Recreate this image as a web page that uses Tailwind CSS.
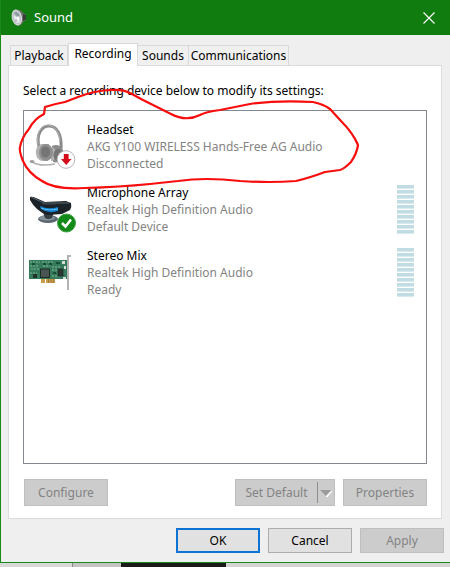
<!DOCTYPE html>
<html lang="en">
<head>
    <meta charset="UTF-8">
    <meta name="viewport" content="width=device-width, initial-scale=1.0">
    <title>Sound</title>
    <script src="https://cdn.jsdelivr.net/npm/@tailwindcss/browser@4"></script>
</head>
<body class="min-h-screen flex flex-col bg-[#dcdcdc] font-['Noto_Sans','Open_Sans',sans-serif] text-[12px] text-black">
    <div class="relative flex-1 flex flex-col bg-[#efefef] border-l border-b border-[#178a17]">
        <!-- Title bar -->
        <header class="h-[35px] shrink-0 flex items-center justify-between bg-[#107c10] text-white pl-[10px] pr-[13px]">
            <div class="flex items-center gap-[7px]">
                <svg class="w-4 h-[18px]" viewBox="0 0 16 18" aria-hidden="true">
                    <path d="M5 .5 L10 1.5 L12 4 L15 5.5 L15 11 L12.500 12.500 L10 16 L6 16.500Z" fill="#6f706d"/>
                    <path d="M12 5 L15 6 L15 10.500 L12 12Z" fill="#353b35"/>
                    <ellipse cx="5.8" cy="8.5" rx="4.6" ry="7.6" transform="rotate(-12 5.8 8.5)" fill="#b9bfc4" stroke="#d9dada"/>
                    <path d="M3 4 Q6 2 8.500 6 L7 8Z" fill="#8b959d"/>
                    <path d="M7 9 L2.500 6 L3.500 11Z" fill="#e9edf0"/>
                    <path d="M7 10 L5 14 Q8 15 9.500 12Z" fill="#e2e6e9"/>
                    <ellipse cx="7" cy="9.500" rx="1.5" ry="2" fill="#f8fafb"/>
                </svg>
                <h1 class="text-[13px]">Sound</h1>
            </div>
            <button class="w-4 h-4 flex items-center justify-center" aria-label="Close">
                <svg class="w-3 h-3" viewBox="0 0 12 12" fill="none" stroke="#fff" stroke-width="1.1"><path d="M.5 .5 L11.5 11.5 M11.5 .5 L.5 11.5"/></svg>
            </button>
        </header>

        <main class="flex-1 flex flex-col pl-[7px] pr-2 pt-2">
            <!-- Tabs -->
            <nav class="flex items-end pl-0.5" role="tablist">
                <button role="tab" class="h-5 w-[58px] border border-b-0 border-[#d9d9d9] bg-[#f0f0f0] whitespace-nowrap flex items-center justify-center">Playback</button>
                <button role="tab" aria-selected="true" class="relative h-[23px] -mb-px w-[70px] border border-b-0 border-[#d9d9d9] bg-white whitespace-nowrap flex items-center justify-center pb-0.5">Recording</button>
                <button role="tab" class="h-5 w-[50px] border border-x-0 border-b-0 border-[#d9d9d9] bg-[#f0f0f0] whitespace-nowrap flex items-center justify-center">Sounds</button>
                <button role="tab" class="h-5 w-[101px] border border-b-0 border-[#d9d9d9] bg-[#f0f0f0] whitespace-nowrap flex items-center justify-center">Communications</button>
            </nav>

            <section class="flex-1 flex flex-col bg-white border border-[#dcdcdc] px-[14px] pt-4 pb-3">
                <p class="leading-[18px] whitespace-nowrap">Select a recording device below to modify its settings:</p>

                <!-- Device list -->
                <ul class="mt-[10px] flex-1 border border-[#828790] pt-1">
                    <li class="flex items-center py-1.5 pl-1 pr-3">
                        <svg class="w-12 h-12 shrink-0" viewBox="0 0 48 48" fill="none" aria-hidden="true">
                            <path d="M11 24 C8 12 13 3 21 3 C29 3 34 12 33 26" stroke="#8a8a8a" stroke-width="3"/>
                            <path d="M10 22 C8 10 13 2 20 2 C26 2 31 8 32 18" stroke="#b9b9b9"/>
                            <path d="M4 39 C9 42 16 43 27 41" stroke="#b0b0b0" stroke-width="1.6"/>
                            <ellipse cx="4" cy="38.500" rx="2.5" ry="1.6" fill="#9d9d9d"/>
                            <path d="M24 23 Q31 20 35 27 L35 34 Q32 41 25 39Z" fill="#8c8c8c"/>
                            <path d="M24 24 Q29 26 28 33 Q27 38 23 38Z" fill="#b0b0b0"/>
                            <ellipse cx="30" cy="32" rx="4.5" ry="6" fill="#757575"/>
                            <path d="M13 21 Q7 24 8 31 Q9 37 14 38 L20 38 L21 21Z" fill="#b2b2b2"/>
                            <ellipse cx="18" cy="29.5" rx="7" ry="8.5" fill="#8e8e8e"/>
                            <ellipse cx="17.500" cy="29" rx="4.5" ry="5.5" fill="#757575"/>
                            <circle cx="38" cy="36.500" r="8.8" fill="#fff" stroke="#b5b5b5"/>
                            <path d="M35.8 31 H40.6 V36 H43.500 L38.2 42 L33 36 H35.8Z" fill="#d40c17"/>
                        </svg>
                        <div class="flex-1 ml-[11px] leading-[17px] whitespace-nowrap text-[#838383]">
                            <p class="text-black">Headset</p>
                            <p>AKG Y100 WIRELESS Hands-Free AG Audio</p>
                            <p>Disconnected</p>
                        </div>
                    </li>
                    <li class="flex items-center py-1.5 pl-1 pr-3">
                        <svg class="w-12 h-12 shrink-0" viewBox="0 0 48 48" aria-hidden="true">
                            <ellipse cx="20" cy="33" rx="10" ry="4" fill="#5b6670"/>
                            <ellipse cx="19" cy="32" rx="8" ry="2.5" fill="#87939d"/>
                            <path d="M15 26 H26 L24 32 Q20 34 17 32Z" fill="#353d44"/>
                            <path d="M2 11 Q4 10 8 12 L17 16 L38 15 L43 17 Q44 21 42 24 L34 28 L19 29 Q8 25 2 14Z" fill="#1b2228"/>
                            <path d="M3 11 L16 17 L41 17" stroke="#5c6871" stroke-width="1" fill="none"/>
                            <path d="M12 20 Q20 24 30 21 L30 25 Q20 28 13 23Z" fill="#1483d4"/>
                            <path d="M13 22 Q20 25 30 23" stroke="#5cc0f5" stroke-width="1" fill="none"/>
                            <path d="M14 18 H28" stroke="#3d4952" stroke-width="1"/>
                            <circle cx="38.500" cy="37" r="9" fill="#118a18" stroke="#3f9f42"/>
                            <path d="M34 37 L37.500 40.500 L43 33.500" stroke="#fff" stroke-width="2.5" fill="none"/>
                        </svg>
                        <div class="flex-1 ml-[11px] leading-[17px] whitespace-nowrap text-[#838383]">
                            <p class="text-black">Microphone Array</p>
                            <p>Realtek High Definition Audio</p>
                            <p>Default Device</p>
                        </div>
                        <div class="meter w-[17px] flex flex-col gap-px"></div>
                    </li>
                    <li class="flex items-center py-1.5 pl-1 pr-3">
                        <svg class="w-12 h-12 shrink-0" viewBox="0 0 48 48" aria-hidden="true">
                            <path d="M1 11 H39 V30 H1Z" fill="#367b5b"/>
                            <path d="M13 30 H17 V34 H13Z M18 30 H27 V34 H18Z" fill="#c99b4a"/>
                            <path d="M20.500 30V34 M23 30V34 M25.500 30V34" stroke="#906d32" stroke-width=".7"/>
                            <path d="M2 13H12 M2 17H10 M3 20H11 M2 24H9 M14 13H26 M24 18H33 M24 21H29 M24 27H31 M15 17H22" stroke="#83b89c" stroke-dasharray="2 1"/>
                            <path d="M4 14H7V16H4Z M15 14H18V16H15Z M21 14H24V16H21Z M28 13H32V15H28Z M25 23H28V25H25Z" fill="#164d35"/>
                            <rect x="12.500" y="20" width="9" height="8.5" fill="#4a5452" stroke="#1a2d25"/>
                            <rect x="5" y="25" width="4" height="4" fill="#20362d"/>
                            <rect x="30" y="20" width="5" height="7" fill="#2b3733" stroke="#17271f" stroke-width=".6"/>
                            <path d="M34 12H37V15H34Z M36 17H38V20H36Z M35 28H38V30H35Z" fill="#d6ddd6"/>
                            <path d="M43 7 H40 V41" stroke="#b4b4b4" stroke-width="2" fill="none"/>
                        </svg>
                        <div class="flex-1 ml-[11px] leading-[17px] whitespace-nowrap text-[#838383]">
                            <p class="text-black">Stereo Mix</p>
                            <p>Realtek High Definition Audio</p>
                            <p>Ready</p>
                        </div>
                        <div class="meter w-[17px] flex flex-col gap-px"></div>
                    </li>
                </ul>

                <!-- Device actions -->
                <div class="mt-[15px] flex items-center justify-between pl-px text-[#838383]">
                    <button disabled class="w-[84px] h-[27px] bg-[#cccccc] border border-[#bfbfbf]">Configure</button>
                    <div class="flex gap-2">
                        <div class="flex h-[27px] w-[100px] bg-[#cccccc] border border-[#bfbfbf]">
                            <button disabled class="flex-1 whitespace-nowrap">Set Default</button>
                            <button disabled class="w-[17px] my-0.5 border-l border-[#8f8f8f] flex items-center justify-center" aria-label="More defaults">
                                <svg class="w-3 h-2" viewBox="0 0 12 8"><path d="M6 7 L7 8 L12 2Z" fill="#fff" stroke="#fff"/><path d="M0 1 H11 L6 7Z" fill="#9b9b9b"/></svg>
                            </button>
                        </div>
                        <button disabled class="w-[84px] h-[27px] bg-[#cccccc] border border-[#bfbfbf]">Properties</button>
                    </div>
                </div>
            </section>
        </main>

        <!-- Dialog buttons -->
        <footer class="flex justify-end gap-2 pt-[9px] pb-[9px] pr-1.5">
            <button class="w-[84px] h-[25px] bg-[#e1e1e1] border-2 border-[#0b73d4]">OK</button>
            <button class="w-[84px] h-[25px] bg-[#e1e1e1] border border-[#adadad]">Cancel</button>
            <button disabled class="w-[84px] h-[25px] bg-[#cccccc] border border-[#bfbfbf] text-[#838383]">Apply</button>
        </footer>

        <!-- Hand-drawn highlight -->
        <svg class="absolute top-0 -left-px w-[450px] h-[200px] pointer-events-none" viewBox="0 0 450 200" fill="none" stroke="#f80c0c" stroke-width="2.2" stroke-linecap="round" stroke-linejoin="round" aria-hidden="true">
            <path d="M44 114 L45 107 Q54 104 65 102 L78 97 Q93 91 110 90 Q123 89 130 93 L143 100 L171 114 Q186 122 200 115 Q205 112 220 110 L250 104 Q278 100 313 102 Q323 104 330 109 L341 121 Q353 133 358 145 Q357 153 351 162 Q344 169 340 170 L325 172 Q309 178 296 181 Q270 183 240 181 Q205 177 178 181 L150 184 Q120 187 85 188 Q55 190 42 181 Q28 173 23 161 Q19 151 20 147 Q22 137 29 129 Q34 119 44 114"/>
        </svg>
    </div>

    <!-- Desktop strip under the window -->
    <div class="h-1 shrink-0 flex">
        <div class="w-[73px] bg-[#d8d8d8] border-r border-[#888888]"></div>
        <div class="w-12 bg-[#c4c4c4]"></div>
        <div class="w-[105px] bg-[#1a1a1a]"></div>
        <div class="flex-1 bg-[#d4d4d4]"></div>
    </div>

    <script>
        // Ten segments per level meter
        document.querySelectorAll('.meter').forEach(meter => {
            for (let i = 0; i < 10; i++) {
                const bar = document.createElement('div');
                bar.className = 'h-1 bg-[#c1dce2] border-b border-[#d9eaee]';
                meter.appendChild(bar);
            }
        });
    </script>
</body>
</html>
